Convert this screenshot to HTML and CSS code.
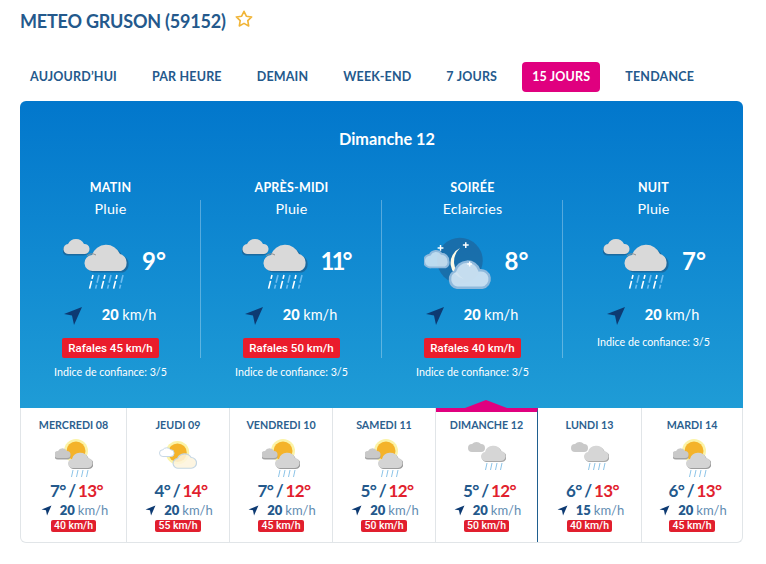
FILE: index.html
```html
<!DOCTYPE html>
<html lang="fr">
<head>
<meta charset="utf-8">
<title>Météo Gruson</title>
<link rel="stylesheet" href="styles.css">
</head>
<body>
<svg class="defs" width="0" height="0" aria-hidden="true">
  <defs>
    <symbol id="cloud-rain" viewBox="0 0 66 52">
      <path class="sh" d="M6 17a5 5 0 0 1-1-10a9 9 0 0 1 16 0a5 5 0 0 1 1 10z" transform="translate(-1 1.500)"/>
      <path class="cl" d="M6 17a5 5 0 0 1-1-10a9 9 0 0 1 16 0a5 5 0 0 1 1 10z"/>
      <path class="sh" d="M30 34a8 8 0 0 1-1-16a15 15 0 0 1 28-1a9 9 0 0 1 1 17z" transform="translate(2 1.500)"/>
      <path class="cl" d="M30 34a8 8 0 0 1-1-16a15 15 0 0 1 28-1a9 9 0 0 1 1 17z"/>
      <path class="wh" d="M24 19a7 7 0 0 1 9-1"/>
      <path class="rain" d="M30 38l-3.500 14M42 38l-3.500 14M54 38l-3.500 14"/>
      <path class="rain2" d="M36 38l-3.500 14M48 38l-3.500 14M60 38l-3.500 14"/>
    </symbol>
    <symbol id="moon" viewBox="0 0 70 54">
      <circle cx="37" cy="24" r="23.500" fill="#1b6aa4" fill-opacity=".85"/>
      <path d="M37 11a17 17 0 0 0 4 32a22 22 0 0 1-10-16a20 20 0 0 1 6-16z" fill="#fdfbe6"/>
      <path d="M7 31a6 6 0 0 1-1-13a7 7 0 0 1 12-1a7 7 0 0 1 7 7a6 6 0 0 1-3 7z" fill="#cfe3f2" fill-opacity=".9" stroke="#8fb9dc" stroke-width="2"/>
      <path d="M34 52a9 9 0 0 1-2-17a13 13 0 0 1 25-1a9 9 0 0 1 3 18z" fill="#cfe3f2" fill-opacity=".95" stroke="#8fb9dc" stroke-width="2.500"/>
      <path d="M17 8v6M14 11h6M43 5v6M40 8h6M47 25v5M44.500 27.500h5" stroke="#fff" stroke-width="1.500"/>
    </symbol>
    <symbol id="sun-rain" viewBox="0 0 38 38">
      <circle cx="21" cy="12" r="12" fill="#fbf3a8"/>
      <circle cx="21" cy="12" r="9.500" fill="#f4b32a"/>
      <path d="M3 20a3.500 3.500 0 0 1 0-7a5 5 0 0 1 9 0a3.500 3.500 0 0 1 0 7z" fill="#a3a3a3" transform="translate(0 .500)"/>
      <path d="M3 19a3.500 3.500 0 0 1 0-7a5 5 0 0 1 9 0a3.500 3.500 0 0 1 0 7z" fill="#c9c9c9"/>
      <path d="M18 29a4.500 4.500 0 0 1-1-9a8.500 8.500 0 0 1 16-1a5 5 0 0 1-1 10z" fill="#9c9c9c" transform="translate(1 1)"/>
      <path d="M18 29a4.500 4.500 0 0 1-1-9a8.500 8.500 0 0 1 16-1a5 5 0 0 1-1 10z" fill="#d4d4d4"/>
      <path d="M18 31l-1.500 7M23 31l-1.500 7M28 31l-1.500 7M33 31l-1.500 7" stroke="#8cc4e8" stroke-width="1" fill="none"/>
    </symbol>
    <symbol id="sun-cloud" viewBox="0 0 39 39">
      <circle cx="19" cy="14" r="12" fill="#fbf3a8"/>
      <circle cx="19" cy="14" r="9.500" fill="#f4b32a"/>
      <path d="M4 18a3.500 3.500 0 0 1 0-7a5 5 0 0 1 8 0a3.500 3.500 0 0 1 0 7z" fill="#fff" stroke="#c4d6e4" stroke-width="1"/>
      <path d="M20 30a5 5 0 0 1-1-10a8 8 0 0 1 14-1a5.500 5.500 0 0 1 0 11z" fill="#fdf3dc" fill-opacity=".85" stroke="#c4d6e4" stroke-width="1.200"/>
    </symbol>
    <symbol id="cloud-only" viewBox="0 0 38 38">
      <path d="M4 13a3.500 3.500 0 0 1 0-8a6 6 0 0 1 9 0a3.500 3.500 0 0 1 0 8z" fill="#c9c9c9"/>
      <path d="M18 22a4.500 4.500 0 0 1-1-9a8.500 8.500 0 0 1 16-1a5 5 0 0 1-1 10z" fill="#a8a8a8" transform="translate(1 1)"/>
      <path d="M18 22a4.500 4.500 0 0 1-1-9a8.500 8.500 0 0 1 16-1a5 5 0 0 1-1 10z" fill="#d6d6d6"/>
      <path d="M19 24l-1.500 7M24 24l-1.500 7M29 24l-1.500 7M34 24l-1.500 7" stroke="#8cc4e8" stroke-width="1" fill="none"/>
    </symbol>
    <symbol id="arrow" viewBox="0 0 20 20">
      <path d="M19 1 1 8l8 1.500L11 19z"/>
    </symbol>
  </defs>
</svg>

<header class="title-row">
  <h1 class="title">METEO GRUSON (59152)</h1>
  <svg class="star" viewBox="0 0 20 20"><path d="M10 1.500l2.600 5.400 5.900.8-4.300 4.100 1 5.900-5.200-2.800-5.200 2.800 1-5.900L1.500 7.700l5.900-.8z"/></svg>
</header>

<nav class="tabs">
  <a class="tab">AUJOURD’HUI</a>
  <a class="tab">PAR HEURE</a>
  <a class="tab">DEMAIN</a>
  <a class="tab">WEEK-END</a>
  <a class="tab">7 JOURS</a>
  <a class="tab active">15 JOURS</a>
  <a class="tab">TENDANCE</a>
</nav>

<section class="panel">
  <h2 class="day-title">Dimanche 12</h2>
  <div class="periods">
    <article class="period">
      <h3 class="p-name">MATIN</h3>
      <p class="p-desc">Pluie</p>
      <div class="p-main"><svg class="p-icon on-blue"><use href="#cloud-rain"/></svg><span class="p-temp">9°</span></div>
      <div class="p-wind"><svg class="arrow"><use href="#arrow"/></svg><span class="w-txt"><b>20</b> km/h</span></div>
      <span class="gust">Rafales 45 km/h</span>
      <p class="conf">Indice de confiance: 3/5</p>
    </article>
    <article class="period">
      <h3 class="p-name">APRÈS-MIDI</h3>
      <p class="p-desc">Pluie</p>
      <div class="p-main"><svg class="p-icon on-blue"><use href="#cloud-rain"/></svg><span class="p-temp narrow">11°</span></div>
      <div class="p-wind"><svg class="arrow"><use href="#arrow"/></svg><span class="w-txt"><b>20</b> km/h</span></div>
      <span class="gust">Rafales 50 km/h</span>
      <p class="conf">Indice de confiance: 3/5</p>
    </article>
    <article class="period">
      <h3 class="p-name">SOIRÉE</h3>
      <p class="p-desc">Eclaircies</p>
      <div class="p-main"><svg class="p-icon moon-icon on-blue"><use href="#moon"/></svg><span class="p-temp">8°</span></div>
      <div class="p-wind"><svg class="arrow"><use href="#arrow"/></svg><span class="w-txt"><b>20</b> km/h</span></div>
      <span class="gust">Rafales 40 km/h</span>
      <p class="conf">Indice de confiance: 3/5</p>
    </article>
    <article class="period last">
      <h3 class="p-name">NUIT</h3>
      <p class="p-desc">Pluie</p>
      <div class="p-main"><svg class="p-icon on-blue"><use href="#cloud-rain"/></svg><span class="p-temp">7°</span></div>
      <div class="p-wind"><svg class="arrow"><use href="#arrow"/></svg><span class="w-txt"><b>20</b> km/h</span></div>
      <p class="conf tight">Indice de confiance: 3/5</p>
    </article>
  </div>
</section>

<section class="days">
  <article class="day">
    <h4 class="d-name">MERCREDI 08</h4>
    <svg class="d-icon"><use href="#sun-rain"/></svg>
    <p class="d-temp"><span class="lo">7°</span> / <span class="hi">13°</span></p>
    <p class="d-wind"><svg class="d-arrow"><use href="#arrow"/></svg><b>20</b> <span>km/h</span></p>
    <span class="d-gust">40 km/h</span>
  </article>
  <article class="day">
    <h4 class="d-name">JEUDI 09</h4>
    <svg class="d-icon"><use href="#sun-cloud"/></svg>
    <p class="d-temp"><span class="lo">4°</span> / <span class="hi">14°</span></p>
    <p class="d-wind"><svg class="d-arrow"><use href="#arrow"/></svg><b>20</b> <span>km/h</span></p>
    <span class="d-gust">55 km/h</span>
  </article>
  <article class="day">
    <h4 class="d-name">VENDREDI 10</h4>
    <svg class="d-icon"><use href="#sun-rain"/></svg>
    <p class="d-temp"><span class="lo">7°</span> / <span class="hi">12°</span></p>
    <p class="d-wind"><svg class="d-arrow"><use href="#arrow"/></svg><b>20</b> <span>km/h</span></p>
    <span class="d-gust">45 km/h</span>
  </article>
  <article class="day">
    <h4 class="d-name">SAMEDI 11</h4>
    <svg class="d-icon"><use href="#sun-rain"/></svg>
    <p class="d-temp"><span class="lo">5°</span> / <span class="hi">12°</span></p>
    <p class="d-wind"><svg class="d-arrow"><use href="#arrow"/></svg><b>20</b> <span>km/h</span></p>
    <span class="d-gust">50 km/h</span>
  </article>
  <article class="day selected">
    <h4 class="d-name">DIMANCHE 12</h4>
    <svg class="d-icon"><use href="#cloud-only"/></svg>
    <p class="d-temp"><span class="lo">5°</span> / <span class="hi">12°</span></p>
    <p class="d-wind"><svg class="d-arrow"><use href="#arrow"/></svg><b>20</b> <span>km/h</span></p>
    <span class="d-gust">50 km/h</span>
  </article>
  <article class="day">
    <h4 class="d-name">LUNDI 13</h4>
    <svg class="d-icon"><use href="#cloud-only"/></svg>
    <p class="d-temp"><span class="lo">6°</span> / <span class="hi">13°</span></p>
    <p class="d-wind"><svg class="d-arrow"><use href="#arrow"/></svg><b>15</b> <span>km/h</span></p>
    <span class="d-gust">40 km/h</span>
  </article>
  <article class="day">
    <h4 class="d-name">MARDI 14</h4>
    <svg class="d-icon"><use href="#sun-rain"/></svg>
    <p class="d-temp"><span class="lo">6°</span> / <span class="hi">13°</span></p>
    <p class="d-wind"><svg class="d-arrow"><use href="#arrow"/></svg><b>20</b> <span>km/h</span></p>
    <span class="d-gust">45 km/h</span>
  </article>
</section>
</body>
</html>
```
FILE: styles.css
```css
* { box-sizing: border-box; }
html, body { margin: 0; padding: 0; }
body {
  width: 766px;
  height: 564px;
  overflow: hidden;
  background: #fff;
  padding: 0 23px 0 20px;
  font-family: "Lato", "Open Sans", sans-serif;
  color: #24598c;
}
h1, h2, h3, h4, p { margin: 0; font-weight: inherit; }
.defs { display: block; height: 0; }

.title-row { display: flex; align-items: center; height: 41px; gap: 9px; }
.title { font-size: 18px; font-weight: 700; letter-spacing: -.2px; color: #24598c; white-space: nowrap; }
.star { width: 18px; height: 18px; margin-top: -4px; fill: none; stroke: #f1b538; stroke-width: 1.800; stroke-linejoin: round; }

.tabs { display: flex; align-items: center; height: 30px; margin-top: 21px; }
.tab { display: block; height: 30px; line-height: 30px; padding: 0 10px; margin-right: 15px; font-size: 12.500px; font-weight: 700; letter-spacing: .17px; color: #24598c; white-space: nowrap; }
.tab.active { background: #e0007f; color: #fff; border-radius: 4px; }

.panel {
  margin-top: 9px;
  height: 307px;
  border-radius: 6px 6px 0 0;
  background: linear-gradient(180deg, #0277cc 0%, #1f9cd6 100%);
  color: #fff;
}
.day-title { height: 79px; padding: 28px 0 0 11px; text-align: center; font-size: 16.300px; font-weight: 700; line-height: 20px; }
.periods { display: grid; grid-template-columns: repeat(4, 181px); }
.period { position: relative; display: flex; flex-direction: column; align-items: center; }
.period::after { content: ""; position: absolute; right: 0; top: 20px; width: 1px; height: 158px; background: rgba(255,255,255,.3); }
.period.last::after { display: none; }
.p-name { font-size: 12.500px; font-weight: 700; line-height: 16px; letter-spacing: .2px; }
.p-desc { font-size: 14.300px; line-height: 18px; margin-top: 4px; letter-spacing: .2px; }
.p-main { display: flex; align-items: flex-start; gap: 13px; height: 66px; margin-top: 14px; padding-top: 5px; padding-left: 8px; }
.period.last .p-main { padding-left: 2px; }
.p-icon { width: 66px; height: 52px; color: #1a6aa0; }
.moon-icon { width: 68px; height: 53px; margin-left: -1px; }
.p-temp { font-size: 24px; font-weight: 700; line-height: 30px; margin-top: 9px; }
.p-temp.narrow { letter-spacing: -3px; }
.p-wind { display: flex; align-items: center; height: 20px; margin-top: 8px; gap: 19px; padding-right: 2px; font-size: 14.500px; }
.arrow { width: 20px; height: 20px; fill: #0d3a72; }
.w-txt { margin-top: -4px; }
.w-txt b { font-weight: 900; }
.gust { display: block; margin-top: 12px; height: 20px; padding: 0 6px; line-height: 20px; background: #ea1c2c; border-radius: 2px; font-family: "Roboto", sans-serif; font-size: 11.500px; font-weight: 500; color: #fff; }
.conf { font-size: 10.700px; line-height: 14px; margin-top: 7px; white-space: nowrap; }
.conf.tight { margin-top: 9px; }

.sh { fill: currentColor; }
.cl { fill: #d9d9d9; }
.wh { fill: none; stroke: #8f8f8f; stroke-width: 1; }
.rain { stroke: #fff; stroke-width: 1.600; stroke-dasharray: 4 2 8; fill: none; }
.rain2 { stroke: #6fbdf0; stroke-width: 1.600; stroke-dasharray: 8 2 4; fill: none; }

.days { display: grid; grid-template-columns: 106px 103px 103px 103px 102px 104px 1fr; height: 135px; border: 1px solid #e1e5e8; border-top: 0; border-radius: 0 0 6px 6px; }
.day { position: relative; display: flex; flex-direction: column; align-items: center; border-right: 1px solid #e1e5e8; padding-top: 10px; }
.day:last-child { border-right: 0; }
.d-name { font-size: 10.700px; font-weight: 700; line-height: 14px; color: #2c5f8f; white-space: nowrap; }
.d-icon { width: 38px; height: 38px; margin-top: 7px; }
.d-temp { font-size: 17px; font-weight: 700; line-height: 20px; margin: 4px 0 0 6px; letter-spacing: -.6px; word-spacing: -1px; color: #24598c; white-space: nowrap; }
.d-temp .hi { color: #e11f2e; }
.d-wind { display: flex; align-items: center; gap: 3px; height: 16px; margin: 1px 0 0 2px; font-size: 13px; white-space: nowrap; }
.d-wind b { font-weight: 800; color: #24598c; }
.d-wind span { color: #5f8cb2; }
.d-arrow { width: 11px; height: 11px; fill: #0d3a72; margin-right: 5px; }
.d-gust { display: block; height: 12px; line-height: 12px; margin-top: 2px; padding: 0 3px; background: #e11f2e; border-radius: 2px; font-family: "Roboto", sans-serif; font-size: 10.500px; font-weight: 500; color: #fff; }

.day.selected { border-right-color: #1f5f8f; border-top: 4px solid #e0007f; padding-top: 6px; }
.day.selected::before { content: ""; position: absolute; left: 29px; top: -12px; width: 0; height: 0; border-left: 21.500px solid transparent; border-right: 21.500px solid transparent; border-bottom: 8px solid #e0007f; }
```
